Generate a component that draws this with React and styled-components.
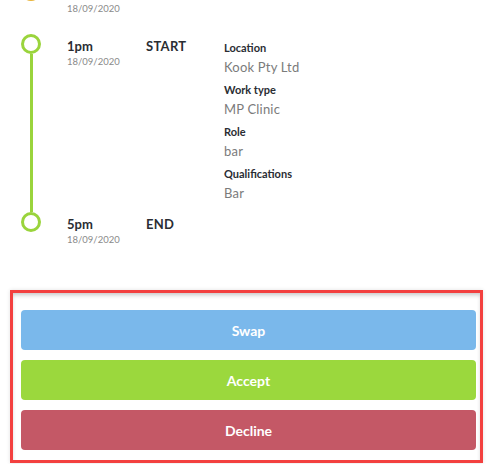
import styled, { createGlobalStyle } from "styled-components";

const GlobalStyle = createGlobalStyle`
  body {
    margin: 0;
    background: #fff;
    font-family: Lato, "Open Sans", Arial, sans-serif;
  }
`;

const Page = styled.div`
  width: 490px;
  height: 464px;
  overflow: hidden;
`;

const Timeline = styled.div`
  margin-top: -19px;
`;

const Entry = styled.div`
  display: grid;
  grid-template-columns: 67px 79px 78px 1fr;
  min-height: ${(p) => p.$height}px;
`;

const Marker = styled.div`
  display: flex;
  flex-direction: column;
`;

const Dot = styled.div`
  width: 20px;
  height: 20px;
  box-sizing: border-box;
  margin-left: 21px;
  border-radius: 50%;
  border: 3px solid ${(p) => p.$color};
  background: ${(p) => (p.$filled ? p.$color : "#fff")};
`;

const Line = styled.div`
  flex: 1;
  width: 3px;
  margin-left: 29.5px;
  background: #9ad43c;
`;

const TimeCell = styled.div`
  padding-top: 4px;
`;

const Time = styled.div`
  font-size: 13px;
  line-height: 16px;
  font-weight: 700;
  color: #2a2d33;
`;

const DateText = styled.div`
  margin-top: 1px;
  font-size: 9.5px;
  line-height: 14px;
  color: #8a8a8a;
`;

const Kind = styled.div`
  padding-top: 4px;
  font-size: 13px;
  line-height: 16px;
  font-weight: 700;
  letter-spacing: 0.3px;
  color: #2a2d33;
`;

const Details = styled.div`
  padding-top: 6px;
`;

const Pair = styled.div`
  margin-bottom: 3px;
`;

const Label = styled.div`
  font-size: 11px;
  line-height: 16px;
  font-weight: 700;
  color: #2a2d33;
`;

const Value = styled.div`
  font-size: 13px;
  line-height: 23px;
  color: #7b7b7b;
  letter-spacing: 0.2px;
`;

const ActionBox = styled.div`
  margin: 41px 7px 0 10px;
  border: 3px solid #f3403f;
  padding: 17px 4px 10px 8px;
  display: flex;
  flex-direction: column;
  gap: 10px;
  box-shadow: inset 0 3px 4px -1px rgba(0, 0, 0, 0.22), 0 0 4px rgba(0, 0, 0, 0.12);
`;

const Button = styled.button`
  height: 40px;
  border: none;
  border-radius: 4px;
  background: ${(p) => p.$bg};
  color: #fff;
  font-family: Lato, "Open Sans", Arial, sans-serif;
  font-size: 14px;
  font-weight: 700;
  cursor: pointer;
`;

const details = [
  ["Location", "Kook Pty Ltd"],
  ["Work type", "MP Clinic"],
  ["Role", "bar"],
  ["Qualifications", "Bar"],
];

export default function App() {
  return (
    <Page>
      <GlobalStyle />
      <Timeline>
        <Entry $height={53}>
          <Marker>
            <Dot $color="#e8b43a" $filled />
          </Marker>
          <TimeCell>
            <Time>9am</Time>
            <DateText>18/09/2020</DateText>
          </TimeCell>
        </Entry>
        <Entry $height={178}>
          <Marker>
            <Dot $color="#9ad43c" />
            <Line />
          </Marker>
          <TimeCell>
            <Time>1pm</Time>
            <DateText>18/09/2020</DateText>
          </TimeCell>
          <Kind>START</Kind>
          <Details>
            {details.map(([label, value]) => (
              <Pair key={label}>
                <Label>{label}</Label>
                <Value>{value}</Value>
              </Pair>
            ))}
          </Details>
        </Entry>
        <Entry $height={37}>
          <Marker>
            <Dot $color="#9ad43c" />
          </Marker>
          <TimeCell>
            <Time>5pm</Time>
            <DateText>18/09/2020</DateText>
          </TimeCell>
          <Kind>END</Kind>
        </Entry>
      </Timeline>
      <ActionBox>
        <Button $bg="#7ab8eb">Swap</Button>
        <Button $bg="#9bd83d">Accept</Button>
        <Button $bg="#c45866">Decline</Button>
      </ActionBox>
    </Page>
  );
}
